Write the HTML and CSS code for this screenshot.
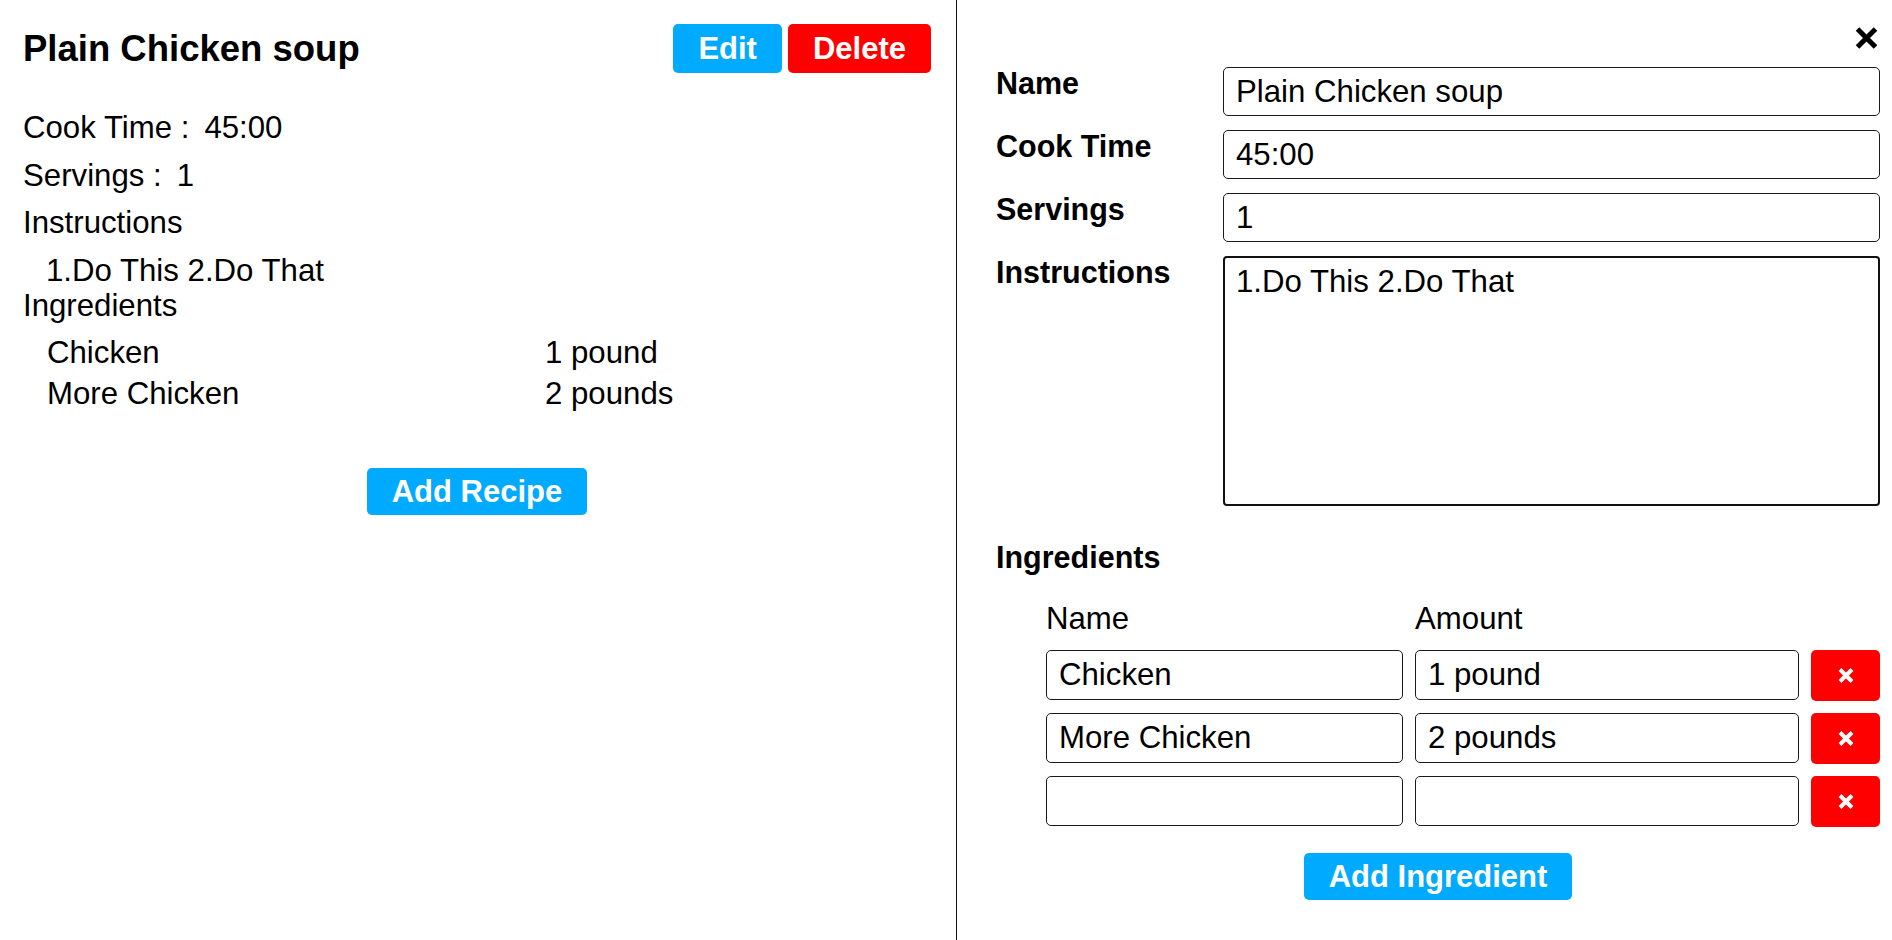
FILE: index.html
```html
<!DOCTYPE html>
<html lang="en">
<head>
<meta charset="utf-8">
<title>Recipes</title>
<link rel="stylesheet" href="styles.css">
</head>
<body>
<div class="app">
  <section class="detail">
    <div class="detail-header">
      <h1 class="recipe-title">Plain Chicken soup</h1>
      <div class="actions">
        <button class="btn btn-blue">Edit</button>
        <button class="btn btn-red">Delete</button>
      </div>
    </div>
    <div class="detail-line cook">Cook Time :<span class="value">45:00</span></div>
    <div class="detail-line servings">Servings :<span class="value">1</span></div>
    <div class="detail-line instr-label">Instructions</div>
    <div class="instr-text">1.Do This 2.Do That</div>
    <div class="ingr-label">Ingredients</div>
    <div class="ingr-list">
      <div class="ingr-row"><span>Chicken</span><span>1 pound</span></div>
      <div class="ingr-row"><span>More Chicken</span><span>2 pounds</span></div>
    </div>
    <div class="center add-recipe-row">
      <button class="btn btn-blue btn-wide">Add Recipe</button>
    </div>
  </section>

  <section class="editor">
    <div class="close-row">
      <button class="close-btn" aria-label="Close">
        <svg width="23" height="22" viewBox="0 0 23 22"><path d="M2.5 2 L20.5 20 M20.5 2 L2.5 20" stroke="#000" stroke-width="5" fill="none"/></svg>
      </button>
    </div>
    <div class="form-grid">
      <label class="field-label">Name</label>
      <input class="field-input" type="text" value="Plain Chicken soup">
      <label class="field-label">Cook Time</label>
      <input class="field-input" type="text" value="45:00">
      <label class="field-label">Servings</label>
      <input class="field-input" type="text" value="1">
      <label class="field-label">Instructions</label>
      <textarea class="field-textarea">1.Do This 2.Do That</textarea>
    </div>
    <div class="ingr-heading">Ingredients</div>
    <div class="ingr-grid">
      <div class="col-head">Name</div>
      <div class="col-head">Amount</div>
      <div></div>

      <input class="field-input" type="text" value="Chicken">
      <input class="field-input" type="text" value="1 pound">
      <button class="btn-x" aria-label="Remove"><svg width="16" height="15" viewBox="0 0 16 15"><path d="M2 1.5 L14 13.5 M14 1.5 L2 13.5" stroke="#fff" stroke-width="4" fill="none"/></svg></button>

      <input class="field-input" type="text" value="More Chicken">
      <input class="field-input" type="text" value="2 pounds">
      <button class="btn-x" aria-label="Remove"><svg width="16" height="15" viewBox="0 0 16 15"><path d="M2 1.5 L14 13.5 M14 1.5 L2 13.5" stroke="#fff" stroke-width="4" fill="none"/></svg></button>

      <input class="field-input" type="text" value="">
      <input class="field-input" type="text" value="">
      <button class="btn-x" aria-label="Remove"><svg width="16" height="15" viewBox="0 0 16 15"><path d="M2 1.5 L14 13.5 M14 1.5 L2 13.5" stroke="#fff" stroke-width="4" fill="none"/></svg></button>
    </div>
    <div class="center add-ingr-row">
      <button class="btn btn-blue btn-wide">Add Ingredient</button>
    </div>
  </section>
</div>
</body>
</html>
```

FILE: styles.css
```css
html, body {
  margin: 0;
  padding: 0;
  background: #fff;
}

body {
  font-family: "Liberation Sans", Arial, sans-serif;
  font-size: 31.2px;
  color: #000;
}

.app {
  display: flex;
  height: 940px;
}

/* ---------- left: recipe detail ---------- */
.detail {
  width: 957px;
  box-sizing: border-box;
  border-right: 1px solid #111;
  padding: 24px 25px 0 23px;
  display: flex;
  flex-direction: column;
}

.detail-header {
  display: flex;
  justify-content: space-between;
  align-items: center;
  height: 49px;
}

.recipe-title {
  margin: 0;
  font-size: 36.5px;
  font-weight: bold;
}

.actions {
  display: flex;
  gap: 6px;
}

.btn {
  font-family: "Liberation Sans", Arial, sans-serif;
  font-size: 31px;
  font-weight: bold;
  color: #fff;
  border: none;
  border-radius: 5px;
  padding: 0 25px;
  height: 49px;
  line-height: 35px;
  cursor: pointer;
}

.btn-blue {
  background: #00aaff;
}

.btn-red {
  background: #ff0000;
}

.btn-wide {
  height: 47px;
  padding: 0 25px;
}

.detail-line {
  line-height: 35px;
}

.value {
  margin-left: 15px;
}

.cook {
  margin-top: 37px;
}

.servings {
  margin-top: 13px;
}

.instr-label {
  margin-top: 12px;
}

.instr-text {
  margin-top: 13px;
  padding-left: 23px;
  line-height: 35px;
}

.ingr-label {
  line-height: 35px;
}

.ingr-list {
  margin-top: 12px;
  padding-left: 24px;
  display: flex;
  flex-direction: column;
  gap: 6px;
}

.ingr-row {
  display: grid;
  grid-template-columns: 498px 1fr;
  line-height: 35px;
}

.center {
  display: flex;
  justify-content: center;
}

.add-recipe-row {
  margin-top: 57px;
}

/* ---------- right: editor ---------- */
.editor {
  flex: 1;
  box-sizing: border-box;
  padding: 27px 12px 0 39px;
  display: flex;
  flex-direction: column;
}

.close-row {
  display: flex;
  justify-content: flex-end;
  height: 22px;
}

.close-btn {
  border: none;
  background: none;
  padding: 0;
  margin-right: 2px;
  width: 23px;
  height: 22px;
  cursor: pointer;
}

.close-btn svg {
  display: block;
}

.form-grid {
  margin-top: 18px;
  display: grid;
  grid-template-columns: 227px 1fr;
  row-gap: 14px;
  align-items: start;
}

.field-label {
  font-weight: bold;
  font-size: 30.5px;
  line-height: 33px;
}

.field-input {
  box-sizing: border-box;
  height: 49px;
  width: 100%;
  border: 1px solid #1a1a1a;
  border-radius: 5px;
  padding: 0 12px;
  font-family: "Liberation Sans", Arial, sans-serif;
  font-size: 31.2px;
  color: #000;
  background: #fff;
  outline: none;
}

.field-textarea {
  box-sizing: border-box;
  height: 250px;
  width: 100%;
  border: 2px solid #111;
  border-radius: 4px;
  padding: 6px 11px;
  font-family: "Liberation Sans", Arial, sans-serif;
  font-size: 31.2px;
  line-height: 35px;
  color: #000;
  resize: none;
  outline: none;
  display: block;
}

.ingr-heading {
  margin-top: 34px;
  font-weight: bold;
  font-size: 30.5px;
  line-height: 35px;
}

.ingr-grid {
  margin-top: 26px;
  margin-left: 50px;
  display: grid;
  grid-template-columns: 357px 384px 69px;
  grid-template-rows: 36px 50px 50px 50px;
  column-gap: 12px;
  row-gap: 13px;
}

.ingr-grid .field-input {
  height: 50px;
}

.col-head {
  line-height: 35px;
}

.btn-x {
  background: #ff0000;
  border: none;
  border-radius: 5px;
  height: 51px;
  padding: 0;
  display: flex;
  align-items: center;
  justify-content: center;
  cursor: pointer;
}

.add-ingr-row {
  margin-top: 27px;
}
```
